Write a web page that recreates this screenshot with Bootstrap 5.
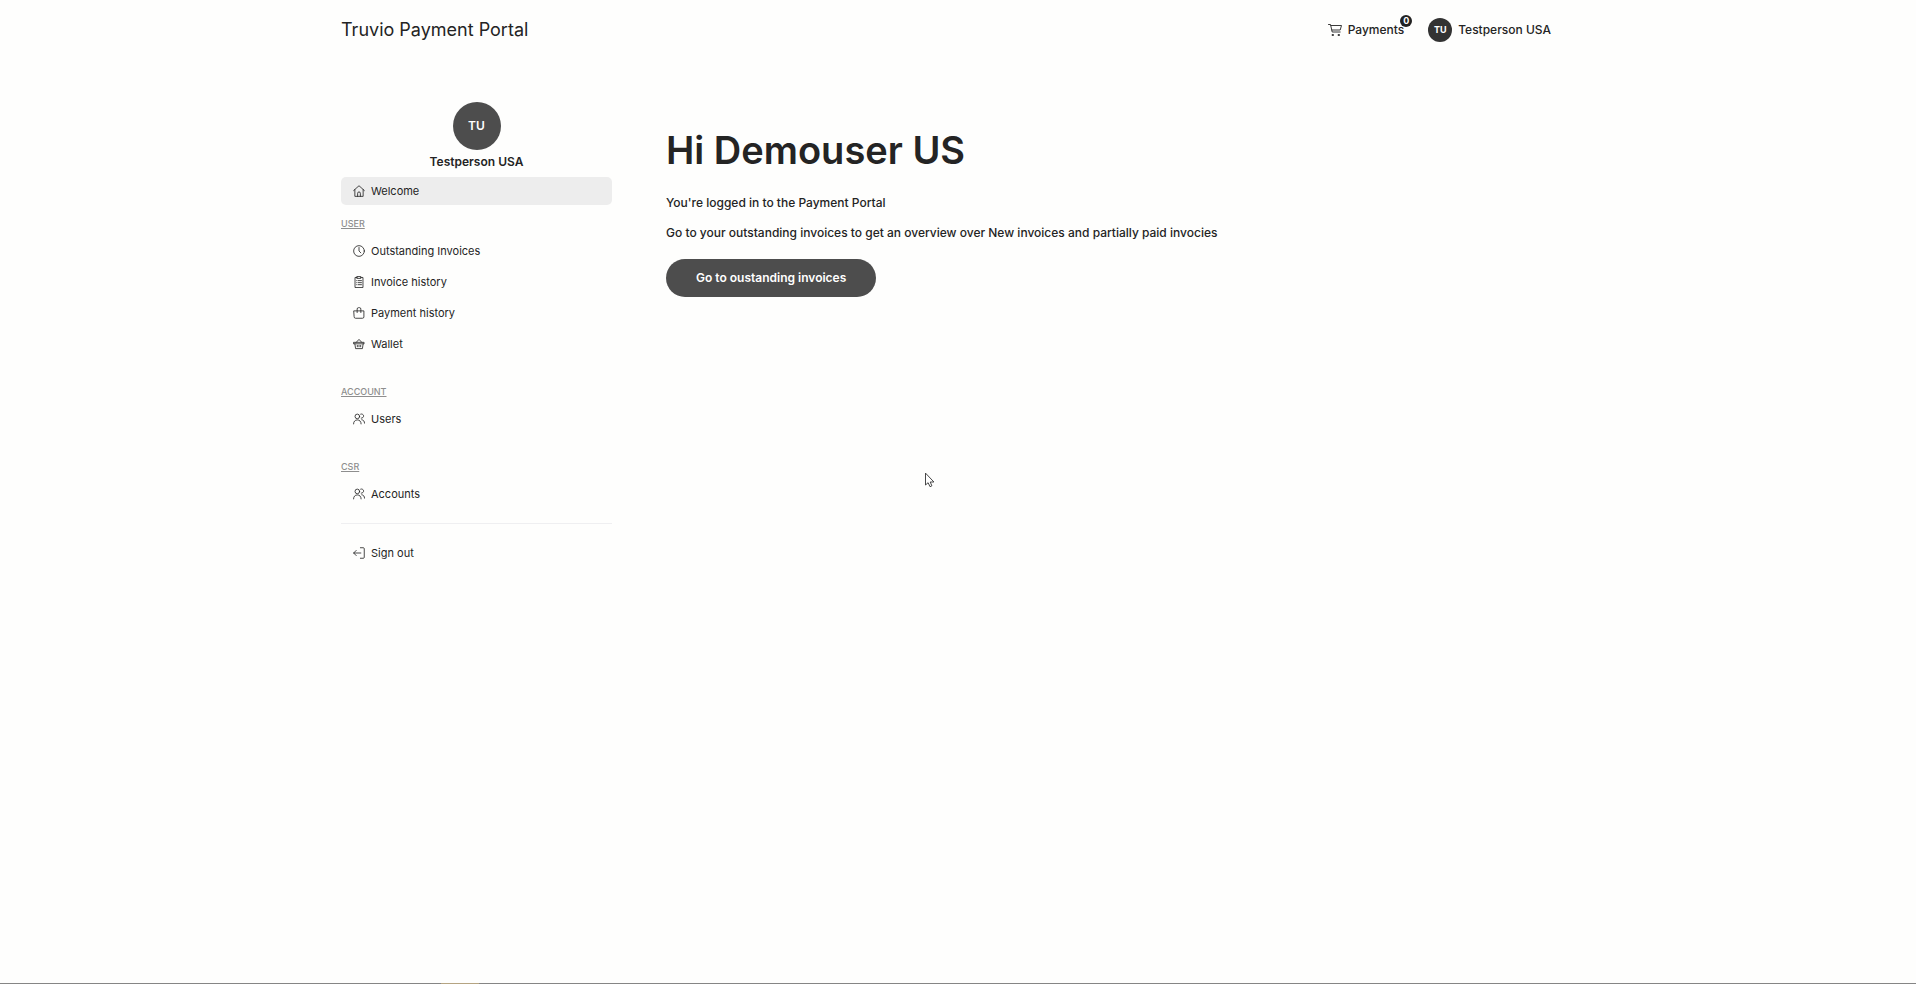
<!DOCTYPE html>
<html lang="en">
<head>
<meta charset="utf-8">
<meta name="viewport" content="width=device-width, initial-scale=1">
<title>Truvio Payment Portal</title>
<link href="https://cdn.jsdelivr.net/npm/bootstrap@5.3.0/dist/css/bootstrap.min.css" rel="stylesheet">
<script src="https://cdn.jsdelivr.net/npm/bootstrap@5.3.0/dist/js/bootstrap.bundle.min.js" defer></script>
<style>
  body { font-family: Inter, "Liberation Sans", sans-serif; font-size: 12px; line-height: 20px; font-weight: 500; color: #242424; background: #fefefd; }
  a { color: inherit; text-decoration: none; }
  svg { fill: none; stroke: currentColor; stroke-width: .9; stroke-linecap: round; stroke-linejoin: round; flex: none; }
  .portal-wrap { max-width: 1234px; }
  .topbar { height: 60px; }
  .brand { font-size: 18px; line-height: 24px; font-weight: 400; }
  .avatar { width: 24px; height: 24px; background: #333; font-size: 9px; }
  .avatar-lg { width: 48px; height: 48px; background: #4d4d4d; font-size: 12px; }
  .cart-link, .user-link { gap: 6px; }
  .cart-count { top: -5px; right: -8px; width: 12px; height: 12px; font-size: 9px; line-height: 12px; background: #222; }
  .layout { padding-top: 42px; gap: 54px; }
  .sidebar { flex: 0 0 271px; }
  .profile { line-height: 16px; margin-bottom: 7px; }
  .menu-link { height: 28px; padding-left: 12px; gap: 6px; font-size: 11px; font-weight: 400; border-radius: 5px; }
  .menu-link.active { background: #ededed; }
  .menu-title { font-size: 9px; line-height: 12px; font-weight: 500; color: #8e8e8e; text-decoration: underline; text-underline-offset: 1px; margin: 0 0 7px; }
  .menu-link + .menu-title { margin-top: 13px; }
  .menu-group { margin-bottom: 28px; display: grid; row-gap: 3px; }
  .menu-line { border-top: 1px solid #efeff1; margin: 15px 0; opacity: 1; }
  .hello { font-size: 38px; line-height: 48px; font-weight: 600; margin: 0 0 19px; }
  .intro p { margin-bottom: 10px; }
  .btn-go { height: 38px; padding: 0 30px; margin-top: 6px; font-size: 12px; font-weight: 600; color: #fff; background: #4d4d4d; border: 0; }
  .btn-go:hover { color: #fff; background: #333; }
  .bottom-edge { height: 1px; background: linear-gradient(90deg, #858585 23%, #b5a482 23% 25%, #858585 25%); }
  .pointer { left: 925px; top: 473px; }
</style>
</head>
<body class="min-vh-100 d-flex flex-column position-relative">
<div class="flex-grow-1 pe-4">
  <header class="container-fluid portal-wrap">
    <nav class="topbar d-flex align-items-center justify-content-between" aria-label="Main">
      <a class="brand" href="#">Truvio Payment Portal</a>
      <div class="d-flex align-items-center gap-4">
        <a class="cart-link d-flex align-items-center position-relative" href="#">
          <svg width="14" height="14" viewBox="0 0 14 14"><path d="M.5 1.500h2l1.700 7.500h8M3 2.500h10.500l-1.300 4.500H4"/><path d="M4.500 11.500h1v1h-1zM10.500 11.500h1v1h-1z"/></svg>
          <span>Payments</span>
          <span class="cart-count position-absolute rounded-circle text-white fw-bold text-center">0</span>
        </a>
        <a class="user-link d-flex align-items-center" href="#">
          <span class="avatar rounded-circle text-white fw-bold d-flex align-items-center justify-content-center">TU</span>
          <span>Testperson USA</span>
        </a>
      </div>
    </nav>
  </header>

  <div class="container-fluid portal-wrap">
    <div class="layout d-flex align-items-start">
      <aside class="sidebar">
        <div class="profile d-flex flex-column align-items-center">
          <span class="avatar-lg rounded-circle text-white fw-semibold d-flex align-items-center justify-content-center mb-1">TU</span>
          <span class="fw-semibold">Testperson USA</span>
        </div>
        <nav aria-label="Account">
          <a class="menu-link active d-flex align-items-center" href="#" aria-current="page">
            <svg width="12" height="12" viewBox="0 0 13 13"><path d="M.7 6 6.500.8 12.300 6M2 5v7.300h9V5M5 12.300V9a1.500 1.500 0 0 1 3 0v3.300"/></svg>Welcome</a>
          <h2 class="menu-title">USER</h2>
          <div class="menu-group">
            <a class="menu-link d-flex align-items-center" href="#">
              <svg width="12" height="12" viewBox="0 0 13 13"><circle cx="6.500" cy="6.500" r="5.800"/><path d="M6.500 2.700v3.800l2 2"/></svg>Outstanding Invoices</a>
            <a class="menu-link d-flex align-items-center" href="#">
              <svg width="12" height="12" viewBox="0 0 13 13"><path d="M4.500 1.600H2.200v10.900h8.600V1.600H8.500M4.500.6h4v2h-4zM4 5h.3M5.800 5h3.400M4 7.200h.3M5.800 7.200h3.400M4 9.400h.3M5.800 9.400h3.400"/></svg>Invoice history</a>
            <a class="menu-link d-flex align-items-center" href="#">
              <svg width="12" height="12" viewBox="0 0 13 13"><path d="M1.200 4.200h10.600v6.500a1.500 1.500 0 0 1-1.500 1.500H2.700a1.500 1.500 0 0 1-1.500-1.500zM4.500 6V2.200A1.500 1.500 0 0 1 6 .7h1a1.500 1.500 0 0 1 1.500 1.500V6"/></svg>Payment history</a>
            <a class="menu-link d-flex align-items-center" href="#">
              <svg width="12" height="12" viewBox="0 0 13 13"><path d="M1 4.700h11v1.600H1zM2 6.300l.8 5.200h7.400l.8-5.200M3.500 4.700 6.500 1.500l3 3.200M4.700 8v1.500M6.500 8v1.500M8.300 8v1.500"/></svg>Wallet</a>
          </div>
          <h2 class="menu-title">ACCOUNT</h2>
          <div class="menu-group">
            <a class="menu-link d-flex align-items-center" href="#">
              <svg width="12" height="12" viewBox="0 0 13 13"><circle cx="4.700" cy="3.700" r="2.500"/><path d="M.6 11.800c0-2.600 1.600-4.300 4.100-4.300s4.100 1.700 4.100 4.300M8.300 1.200a2.300 2.300 0 1 1 .6 4.400M9.500 7.300c1.900.2 3 1.600 3 3.700"/></svg>Users</a>
          </div>
          <h2 class="menu-title">CSR</h2>
          <a class="menu-link d-flex align-items-center" href="#">
            <svg width="12" height="12" viewBox="0 0 13 13"><circle cx="4.700" cy="3.700" r="2.500"/><path d="M.6 11.800c0-2.600 1.600-4.300 4.100-4.300s4.100 1.700 4.100 4.300M8.300 1.200a2.300 2.300 0 1 1 .6 4.400M9.500 7.300c1.900.2 3 1.600 3 3.700"/></svg>Accounts</a>
          <hr class="menu-line">
          <a class="menu-link d-flex align-items-center" href="#">
            <svg width="12" height="12" viewBox="0 0 13 13"><path d="M8 .8h3.200a1 1 0 0 1 1 1v9.400a1 1 0 0 1-1 1H8M8.500 6.500H.7M3.500 3.700.7 6.500l2.800 2.800"/></svg>Sign out</a>
        </nav>
      </aside>

      <main class="intro flex-grow-1 pt-4">
        <h1 class="hello">Hi Demouser US</h1>
        <p>You're logged in to the Payment Portal</p>
        <p>Go to your outstanding invoices to get an overview over New invoices and partially paid invocies</p>
        <button class="btn btn-go rounded-pill" type="button">Go to oustanding invoices</button>
      </main>
    </div>
  </div>
</div>
<div class="bottom-edge"></div>
<svg class="pointer position-absolute" width="10" height="15" viewBox="0 0 10 15" aria-hidden="true"><path d="M.5.5v11.500l2.600-2.300 1.900 4 1.900-.9L5.200 9h3.300z" fill="#fff" stroke="#333"/></svg>
</body>
</html>
